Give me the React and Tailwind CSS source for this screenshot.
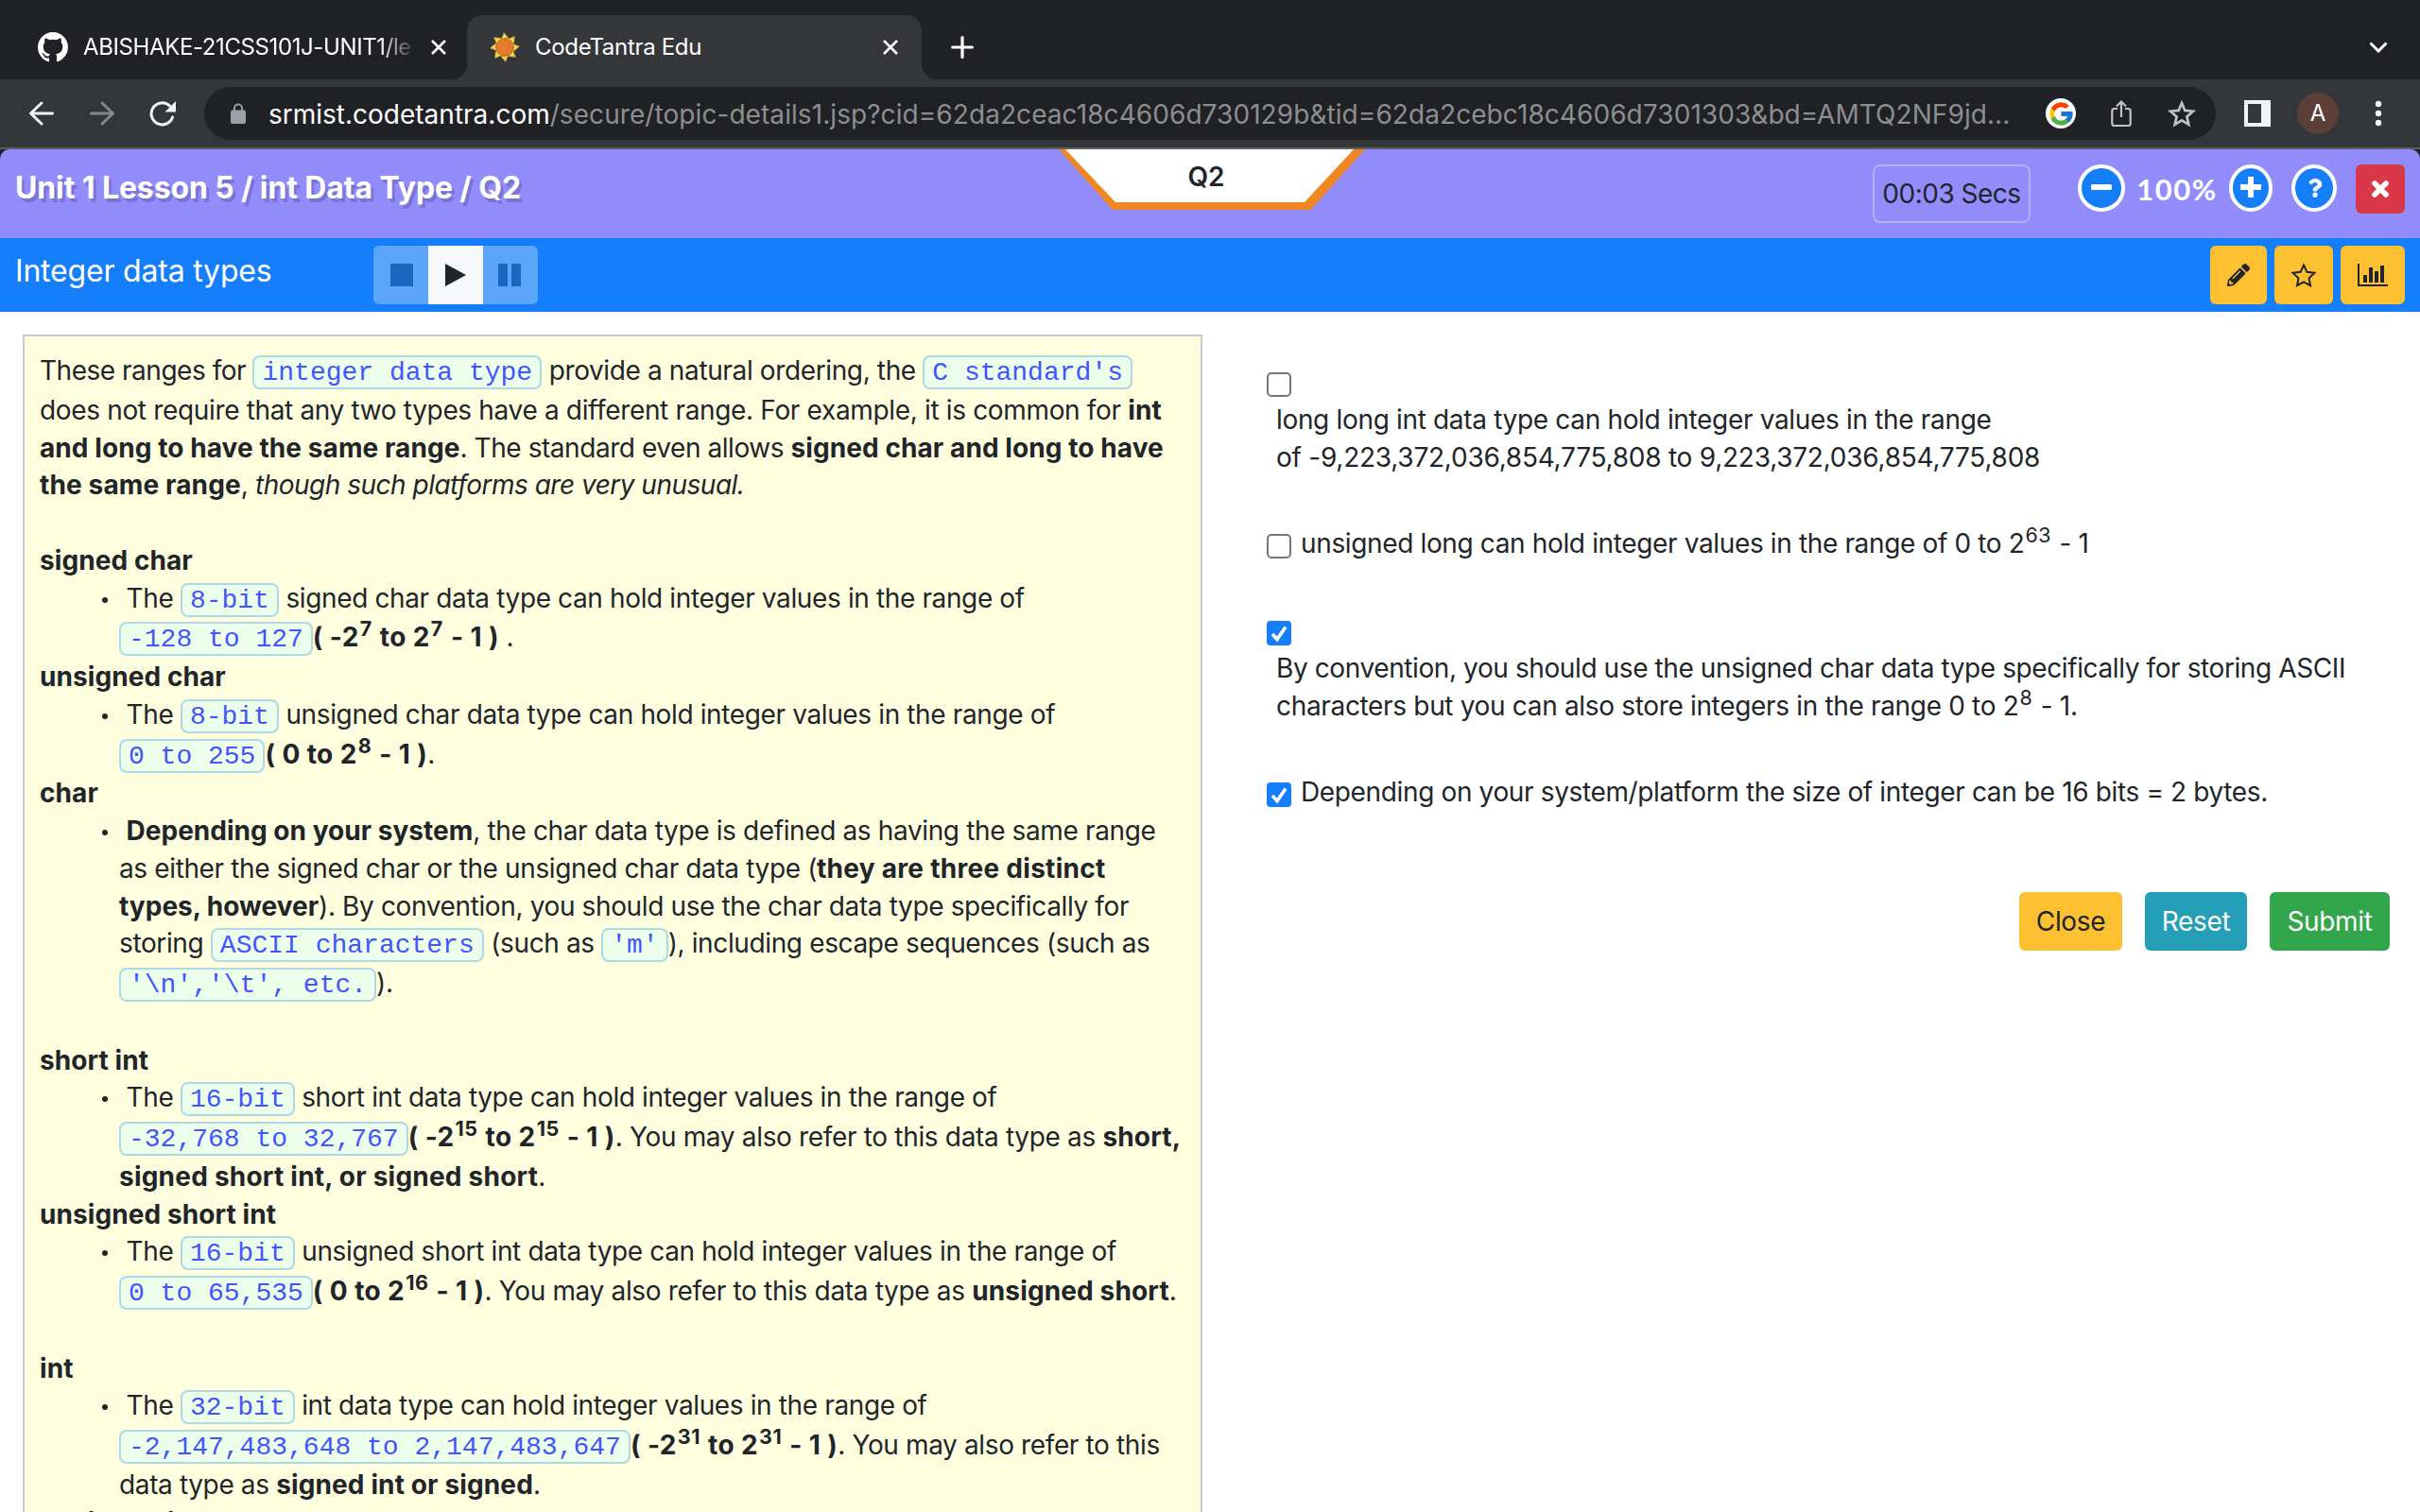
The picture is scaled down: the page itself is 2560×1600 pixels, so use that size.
import React from "react";
import { FcGoogle } from "react-icons/fc";
import { FaPencilAlt, FaQuestion } from "react-icons/fa";

const Chip = ({ children }) => (
  <code className="rounded-[8px] border-2 border-[#add8e6] bg-[#ebffeb] px-2 pt-px font-['Liberation_Mono',monospace] text-[28px] leading-none tracking-normal whitespace-pre text-[#4353ff]">
    {children}
  </code>
);
const B = ({ t = "tracking-[0.13px]", children }) => <b className={`font-bold ${t}`}>{children}</b>;
const P = ({ children }) => <b className="font-bold tracking-[0.4px]">{children}</b>;
const Sup = ({ children }) => <span className="mr-px ml-px align-[11px] text-[21.500px] leading-[0] tracking-[0.5px]">{children}</span>;

const Line = ({ h = "h-[40px]", children }) => <div className={`${h} whitespace-pre`}>{children}</div>;
const Head = ({ h, children }) => (
  <Line h={h}>
    <B t="tracking-[0.08px]">{children}</B>
  </Line>
);
const Item = ({ h = "h-[41px]", children }) => (
  <div className={`${h} flex whitespace-pre`}>
    <i className="mt-[19px] mr-3 ml-[66px] size-[6px] rounded-full bg-[#212529]" />
    <div> {children}</div>
  </div>
);
const Cont = ({ h, children }) => <div className={`${h} pl-[84px] whitespace-pre`}>{children}</div>;

function Close() {
  return (
    <svg className="size-4" viewBox="0 0 16 16" stroke="#fff" strokeWidth="2.6">
      <path d="M1 1l14 14M15 1L1 15" />
    </svg>
  );
}

function Sun() {
  return (
    <svg className="size-8" viewBox="-16 -16 32 32">
      {[0, 45, 90, 135, 180, 225, 270, 315].map((a) => (
        <path key={a} transform={`rotate(${a})`} d="M-6-7Q-2-10-1-15.500Q3-12 5-7Z" fill="#f2d64a" stroke="#b79a35" strokeWidth=".5" />
      ))}
      <circle r="9.300" fill="#e57a2a" stroke="#a8591f" strokeWidth=".8" />
    </svg>
  );
}

function TabStrip() {
  return (
    <div className="flex h-[84px] bg-[#202124] pt-4 text-[24px] tracking-[-0.39px] text-white">
      <div className="flex w-[494px] items-center pl-10">
        <svg className="size-8" viewBox="0 0 16 16" fill="#fff">
          <path d="M8 0C3.580 0 0 3.580 0 8c0 3.540 2.290 6.530 5.470 7.590.4.070.55-.17.55-.38 0-.19-.01-.82-.01-1.490-2.010.37-2.530-.49-2.690-.94-.09-.23-.48-.94-.82-1.130-.28-.15-.68-.52-.01-.53.63-.01 1.080.58 1.230.82.72 1.210 1.870.87 2.330.66.07-.52.28-.87.51-1.070-1.780-.2-3.640-.89-3.640-3.950 0-.87.31-1.590.82-2.150-.08-.2-.36-1.020.08-2.120 0 0 .67-.21 2.200.82.64-.18 1.320-.27 2-.27s1.360.09 2 .27c1.530-1.040 2.200-.82 2.200-.82.44 1.100.16 1.920.08 2.120.51.56.82 1.270.82 2.150 0 3.070-1.870 3.750-3.650 3.950.29.25.54.73.54 1.480 0 1.070-.01 1.930-.01 2.200 0 .21.15.46.55.38A8.010 8.010 0 0 0 16 8c0-4.420-3.580-8-8-8z" />
        </svg>
        <div className="ml-4 w-[352px] mask-r-from-89% mask-r-to-100% whitespace-nowrap">ABISHAKE-21CSS101J-UNIT1/le</div>
        <div className="ml-4">
          <Close />
        </div>
      </div>
      <div className="relative flex w-[481px] items-center rounded-t-2xl bg-[#35363a] pr-[25px] pl-6">
        <svg className="absolute bottom-0 -left-4 size-4" viewBox="0 0 16 16">
          <path d="M16 0v16H0A16 16 0 0 0 16 0z" fill="#35363a" />
        </svg>
        <svg className="absolute -right-4 bottom-0 size-4" viewBox="0 0 16 16">
          <path d="M0 0v16h16A16 16 0 0 1 0 0z" fill="#35363a" />
        </svg>
        <Sun />
        <div className="ml-4 flex-1 tracking-[-0.32px]">CodeTantra Edu</div>
        <Close />
      </div>
      <div className="flex flex-1 items-center justify-between pr-[34px] pl-[31px]">
        <svg className="size-6" viewBox="0 0 24 24" stroke="#fff" strokeWidth="3.200" strokeLinecap="round">
          <path d="M12 1.600v20.800M1.600 12h20.800" />
        </svg>
        <svg className="h-3 w-5" viewBox="0 0 20 12" fill="none" stroke="#fff" strokeWidth="3">
          <path d="M1.500 1.500L10 10l8.500-8.500" />
        </svg>
      </div>
    </div>
  );
}

function Toolbar() {
  return (
    <div className="flex h-[74px] items-center border-b-2 border-[#5f6064] bg-[#35363a] pl-[30px] text-[28px]">
      <svg className="h-7 w-7" viewBox="0 0 28 28" fill="none" stroke="#f1f3f4" strokeWidth="3" strokeLinecap="round" strokeLinejoin="round">
        <path d="M14 3L2.500 14l11.500 11M3 14h22.500" />
      </svg>
      <svg className="ml-9 h-7 w-7" viewBox="0 0 28 28" fill="none" stroke="#86878a" strokeWidth="3" strokeLinecap="round" strokeLinejoin="round">
        <path d="M14 3l11.500 11-11.500 11M25 14H2.500" />
      </svg>
      <svg className="ml-9 h-7 w-7" viewBox="0 0 28 28" fill="none">
        <path d="M24.500 18A11.500 11.500 0 1 1 21.500 6" stroke="#f1f3f4" strokeWidth="3" strokeLinecap="round" />
        <path d="M28 1v11.500H16.500z" fill="#f1f3f4" />
      </svg>
      <div className="ml-[30px] flex h-14 w-[2128px] items-center rounded-full bg-[#202124] pr-[20px] pl-7">
        <svg className="h-[22px] w-4" viewBox="0 0 16 22">
          <rect y="7.500" width="16" height="14.500" rx="2" fill="#9aa0a6" />
          <path d="M4 8V5.500a4 4 0 0 1 8 0V8" fill="none" stroke="#9aa0a6" strokeWidth="2" />
        </svg>
        <div className="ml-[24px] flex-1 pt-px whitespace-nowrap">
          <span className="text-white">srmist.codetantra.com</span>
          <span className="tracking-[0.07px] text-[#8d8e90]">/secure/topic-details1.jsp?cid=62da2ceac18c4606d730129b&amp;tid=62da2cebc18c4606d7301303&amp;bd=AMTQ2NF9jd...</span>
        </div>
        <div className="flex size-8 items-center justify-center rounded-full bg-white">
          <FcGoogle className="size-[29px]" />
        </div>
        <svg className="ml-[37px] h-[30px] w-[22px]" viewBox="0 0 22 30" fill="none" stroke="#c0c1c3" strokeWidth="2.200">
          <path d="M7 10H3.500a2.200 2.200 0 0 0-2.200 2.200v13.600A2.200 2.200 0 0 0 3.500 28h15a2.200 2.200 0 0 0 2.200-2.200V12.200A2.200 2.200 0 0 0 18.500 10H15M11 19V3M6 7.500L11 2.500l5 5" />
        </svg>
        <svg className="ml-[37px] h-[30px] w-[32px]" viewBox="0 0 32 30" fill="none" stroke="#c0c1c3" strokeWidth="2.700">
          <path d="M16 4l3.300 7.900 8.600.8-6.500 5.700 1.900 8.400L16 22.400l-7.300 4.400 1.900-8.400-6.500-5.700 8.600-.8z" />
        </svg>
      </div>
      <svg className="ml-[30px] size-7" viewBox="0 0 28 28">
        <path d="M0 0h28v28H0zM4 4v20h14V4z" fill="#f1f3f4" fillRule="evenodd" />
      </svg>
      <div className="ml-7 flex size-11 items-center justify-center rounded-full bg-[#5c4037] text-[24px] text-white">A</div>
      <svg className="ml-[38px] h-7 w-2" viewBox="0 0 8 28" fill="#f1f3f4">
        <circle cx="4" cy="4" r="3.200" />
        <circle cx="4" cy="14" r="3.200" />
        <circle cx="4" cy="24" r="3.200" />
      </svg>
    </div>
  );
}

function LessonBar() {
  return (
    <div className="bg-[#202124]">
      <div className="relative flex h-[94px] items-start rounded-t-[10px] bg-[#938cfd] pt-4 pr-4 pl-4">
        <h1 className="h-12 flex-1 text-[32px] leading-[50px] font-bold tracking-[-0.11px] text-white [text-shadow:3px_4px_0_#7a73d6]">Unit 1 Lesson 5 / int Data Type / Q2</h1>
        <div className="absolute top-0 left-[1120px] h-[64px] w-[324px]">
          <svg className="absolute inset-0" width="324" height="64" viewBox="0 0 324 64">
            <path d="M0 0h324l-57.500 64H57z" fill="#f08722" />
            <path d="M7 0h305l-52 56H60z" fill="#fff" />
          </svg>
          <div className="relative pr-3 text-center text-[28px] leading-[59px] font-semibold">Q2</div>
        </div>
        <div className="h-[62px] w-[167px] rounded-[8px] border-2 border-[#b4affe] text-center text-[28px] leading-[59px] tracking-[-0.5px]">00:03 Secs</div>
        <svg className="ml-[50px]" width="50" height="50" viewBox="0 0 50 50">
          <ellipse cx="25" cy="25" rx="23" ry="23" fill="#157efb" stroke="#fff" strokeWidth="4" />
          <rect x="14" y="21" width="22" height="6" rx="1.500" fill="#fff" />
        </svg>
        <div className="w-[110px] text-center font-[Lato,sans-serif] text-[31px] leading-[53px] font-bold tracking-[1.5px] text-white">100%</div>
        <svg width="46" height="50" viewBox="0 0 46 50">
          <ellipse cx="23" cy="25" rx="21" ry="23" fill="#157efb" stroke="#fff" strokeWidth="4" />
          <path d="M23 13v22M12 24h22" stroke="#fff" strokeWidth="6" />
        </svg>
        <div className="ml-5 flex h-[50px] w-12 items-center justify-center rounded-[50%] border-4 border-white bg-[#157efb]">
          <FaQuestion className="mr-[-2px] size-[20px] text-white" />
        </div>
        <div className="ml-5 flex size-[52px] items-center justify-center rounded-[6px] bg-[#da3849]">
          <svg className="size-[18px]" viewBox="0 0 18 18" stroke="#fff" strokeWidth="5.600" strokeLinecap="round">
            <path d="M3 3l12 12M15 3L3 15" />
          </svg>
        </div>
      </div>
    </div>
  );
}

function TopicBar() {
  return (
    <div className="flex h-[78px] items-start bg-[#157efb] pt-2 pr-4 pl-4">
      <h2 className="w-[379px] pt-[3px] text-[32px] leading-[48px] tracking-[-0.2px] text-white">Integer data types</h2>
      <div className="flex h-[62px] overflow-hidden rounded-[6px] bg-[#5ba4fc]">
        <div className="flex w-[58px] items-center justify-center pl-0.5">
          <i className="size-6 bg-[#1a66c0]" />
        </div>
        <div className="flex w-[58px] items-center justify-center bg-[#f8f9fc]">
          <svg className="h-6 w-[22px]" viewBox="0 0 22 24" fill="#212529">
            <path d="M0 0l22 12L0 24z" />
          </svg>
        </div>
        <div className="flex w-[58px] items-center justify-center gap-1 pr-[2px]">
          <i className="h-6 w-[10px] bg-[#1a66c0]" />
          <i className="h-6 w-[10px] bg-[#1a66c0]" />
        </div>
      </div>
      <div className="ml-auto flex gap-2 text-[#212529]">
        <div className="flex h-[62px] w-[60px] items-center justify-center rounded-[6px] bg-[#fdc030]">
          <FaPencilAlt className="size-6" />
        </div>
        <div className="flex h-[62px] w-[62px] items-center justify-center rounded-[6px] bg-[#fdc030]">
          <svg className="h-[26px] w-[28px]" viewBox="0 0 28 26" fill="none" stroke="#212529" strokeWidth="2">
            <path d="M14 2.500l3.400 7.300 8 1-5.900 5.500 1.500 7.900-7-3.900-7 3.900 1.500-7.900L2.600 10.800l8-1z" />
          </svg>
        </div>
        <div className="flex h-[62px] w-[68px] items-center justify-center rounded-[6px] bg-[#fdc030]">
          <svg className="h-6 w-8" viewBox="0 0 32 24" fill="#212529">
            <path d="M0 0h2v22h30v2H0zM6 12h4v8H6zM12 4h4v16h-4zM18 8h4v12h-4zM24 2h4v18h-4z" />
          </svg>
        </div>
      </div>
    </div>
  );
}

const Intro = () => (
  <>
    <Line h="h-[42px]"><span className="tracking-[-0.48px]">These ranges for </span><Chip>integer data type</Chip> provide a natural ordering, the <Chip>C standard's</Chip></Line>
    <Line><span className="tracking-[-0.34px]">does not require that any two types have a different range. For example, it is common for </span><B>int</B></Line>
    <Line h="h-[39px]"><B t="tracking-[0.08px]">and long to have the same range</B><span className="tracking-[-0.44px]">. The standard even allows </span><B t="tracking-[0.08px]">signed char and long to have</B></Line>
    <Line h="h-[80px]"><B>the same range</B>, <em className="tracking-[-0.5px]">though such platforms are very unusual.</em></Line>
  </>
);

function Article() {
  return (
    <div className="ml-6 h-[1400px] w-[1248px] border-2 border-[#c9c9c9] bg-[#ffffe0] pt-4 pl-4 text-[28px] leading-[40px] tracking-[-0.37px]">
      <Intro />
      <Head>signed char</Head>
      <Item>The <Chip>8-bit</Chip> signed char data type can hold integer values in the range of</Item>
      <Cont h="h-[42px]"><Chip>-128 to 127</Chip><P>( -2<Sup>7</Sup> to 2<Sup>7</Sup> - 1 )</P> .</Cont>
      <Head>unsigned char</Head>
      <Item h="h-[42px]">The <Chip>8-bit</Chip> unsigned char data type can hold integer values in the range of</Item>
      <Cont h="h-[41px]"><Chip>0 to 255</Chip><P>( 0 to 2<Sup>8</Sup> - 1 )</P>.</Cont>
      <Head>char</Head>
      <Item h="h-[40px]"><B t="tracking-[0.02px]">Depending on your system</B>, the char data type is defined as having the same range</Item>
      <Cont h="h-[40px]">as either the signed char or the unsigned char data type (<B t="tracking-[0.28px]">they are three distinct</B></Cont>
      <Cont h="h-[39px]"><B t="tracking-[0]">types, however</B>). By convention, you should use the char data type specifically for</Cont>
      <Cont h="h-[42px]">storing <Chip>ASCII characters</Chip> (such as <Chip>'m'</Chip>), including escape sequences (such as</Cont>
      <Cont h="h-[82px]"><Chip>{"'\\n','\\t', etc."}</Chip>).</Cont>
      <Head h="h-[39px]">short int</Head>
      <Item h="h-[42px]">The <Chip>16-bit</Chip> short int data type can hold integer values in the range of</Item>
      <Cont h="h-[42px]"><Chip>-32,768 to 32,767</Chip><P>( -2<Sup>15</Sup> to 2<Sup>15</Sup> - 1 )</P>. <span className="tracking-[-0.33px]">You may also refer to this data type as </span><B>short,</B></Cont>
      <Cont h="h-[40px]"><B t="tracking-[0.22px]">signed short int, or signed short</B>.</Cont>
      <Head h="h-[39px]">unsigned short int</Head>
      <Item h="h-[42px]">The <Chip>16-bit</Chip> unsigned short int data type can hold integer values in the range of</Item>
      <Cont h="h-[82px]"><Chip>0 to 65,535</Chip><P>( 0 to 2<Sup>16</Sup> - 1 )</P>. <span className="tracking-[-0.33px]">You may also refer to this data type as </span><B>unsigned short</B>.</Cont>
      <Head h="h-[39px]">int</Head>
      <Item h="h-[42px]">The <Chip>32-bit</Chip> int data type can hold integer values in the range of</Item>
      <Cont h="h-[42px]"><Chip>-2,147,483,648 to 2,147,483,647</Chip><P>( -2<Sup>31</Sup> to 2<Sup>31</Sup> - 1 )</P>. You may also refer to this</Cont>
      <Cont h="h-[40px]">data type as <B>signed int or signed</B>.</Cont>
      <Head>unsigned int</Head>
    </div>
  );
}

function Check({ on }) {
  return on ? (
    <svg className="size-[26px] shrink-0" viewBox="0 0 26 26">
      <rect width="26" height="26" rx="4" fill="#157efb" />
      <path d="M6 14l5 5.500L20 6.500" fill="none" stroke="#fff" strokeWidth="3.600" />
    </svg>
  ) : (
    <div className="size-[26px] shrink-0 rounded-[5px] border-2 border-[#767676] bg-white" />
  );
}

function Options() {
  return (
    <div className="ml-[68px] flex-1 pt-[40px] pr-8 text-[28px] leading-[40px] tracking-[-0.36px] whitespace-pre">
      <Check />
      <div className="mt-1 pl-[10px]">
        <div className="tracking-[-0.33px]">long long int data type can hold integer values in the range</div>
        <div className="tracking-[-0.24px]">of -9,223,372,036,854,775,808 to 9,223,372,036,854,775,808</div>
      </div>
      <div className="mt-[51px] flex gap-[10px]">
        <div className="pt-[10px]"><Check /></div>
        <div>unsigned long can hold integer values in the range of 0 to 2<Sup>63</Sup> - 1</div>
      </div>
      <div className="mt-[62px]"><Check on /></div>
      <div className="mt-1 pl-[10px]">
        <div className="tracking-[-0.4px]">By convention, you should use the unsigned char data type specifically for storing ASCII</div>
        <div className="tracking-[-0.33px]">characters but you can also store integers in the range 0 to 2<Sup>8</Sup> - 1.</div>
      </div>
      <div className="mt-[51px] flex gap-[10px]">
        <div className="pt-[10px]"><Check on /></div>
        <div>Depending on your system/platform the size of integer can be 16 bits = 2 bytes.</div>
      </div>
      <div className="mt-[86px] flex justify-end gap-6 leading-[62px] text-white">
        <div className="w-[109px] rounded-[6px] bg-[#fdc030] text-center text-[#212529]">Close</div>
        <div className="w-[108px] rounded-[6px] bg-[#259fb7] text-center">Reset</div>
        <div className="w-[127px] rounded-[6px] bg-[#31a64b] text-center">Submit</div>
      </div>
    </div>
  );
}

export default function App() {
  return (
    <div className="h-[1600px] w-[2560px] overflow-hidden bg-white font-[Inter,sans-serif] text-[#212529]">
      <TabStrip />
      <Toolbar />
      <LessonBar />
      <TopicBar />
      <div className="flex items-start pt-6">
        <Article />
        <Options />
      </div>
    </div>
  );
}
